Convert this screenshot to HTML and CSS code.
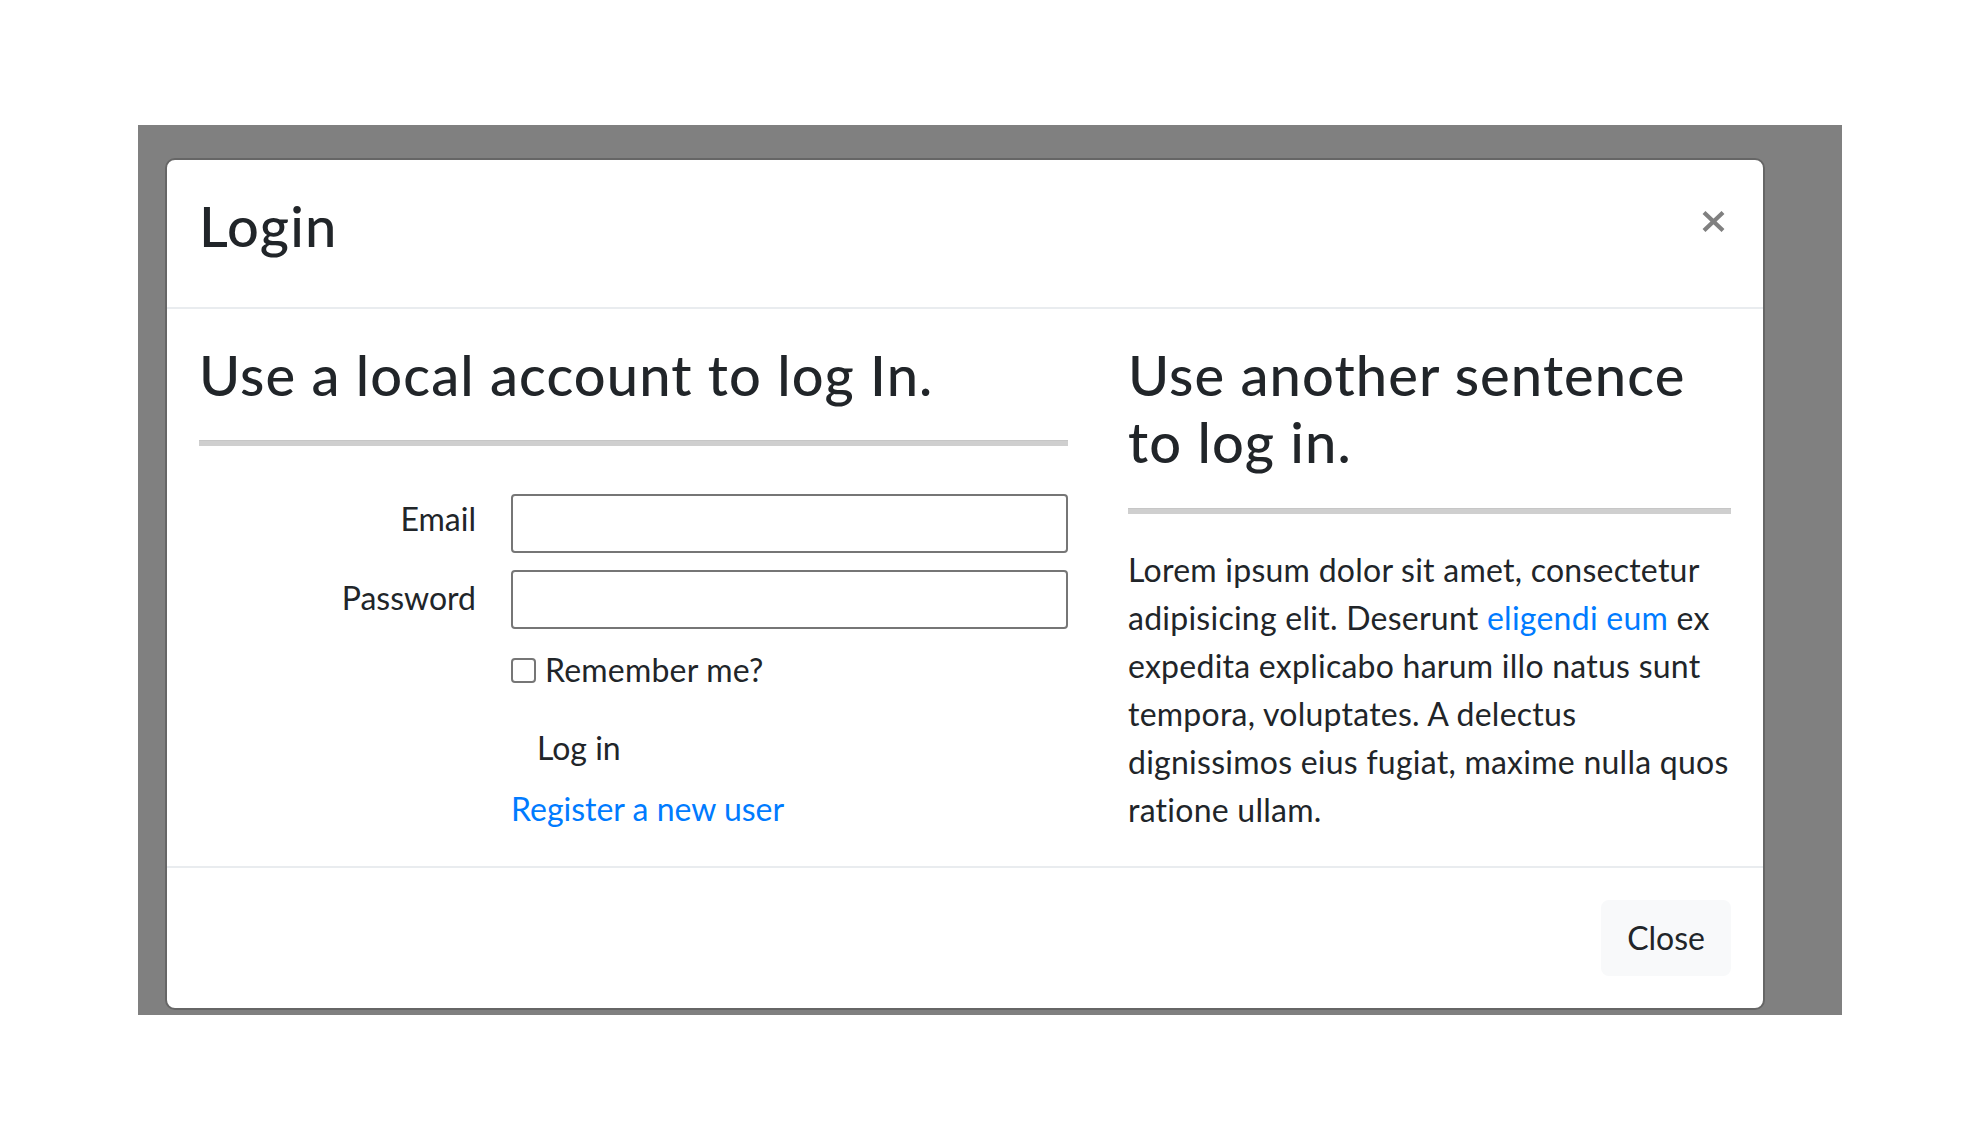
FILE: index.html
```html
<!DOCTYPE html>
<html lang="en">
<head>
<meta charset="utf-8">
<title>Login</title>
<link rel="stylesheet" href="styles.css">
</head>
<body>
<div class="backdrop">
  <div class="modal">
    <div class="modal-header">
      <h3 class="modal-title">Login</h3>
      <button class="close" type="button" aria-label="Close">
        <svg class="close-icon" width="23" height="21" viewBox="0 0 23 21"><path d="M2 1.5 L21 19.5 M21 1.5 L2 19.5" stroke="#808080" stroke-width="4.2" fill="none"/></svg>
      </button>
    </div>
    <div class="modal-body">
      <div class="columns">
        <section class="col-left">
          <h3 class="section-title">Use a local account to log In.</h3>
          <hr class="rule">
          <form class="login-form">
            <div class="form-row">
              <label class="form-label">Email</label>
              <input class="form-input" type="email">
            </div>
            <div class="form-row">
              <label class="form-label label-password">Password</label>
              <input class="form-input" type="password">
            </div>
            <div class="form-row row-check">
              <span></span>
              <label class="check"><input class="check-box" type="checkbox"><span class="check-text">Remember me?</span></label>
            </div>
            <div class="form-row row-submit">
              <span></span>
              <div class="submit-cell"><button class="btn-plain" type="button">Log in</button></div>
            </div>
            <div class="form-row row-link">
              <span></span>
              <a class="link" href="#">Register a new user</a>
            </div>
          </form>
        </section>
        <section class="col-right">
          <h3 class="section-title">Use another sentence to log in.</h3>
          <hr class="rule">
          <p class="text">Lorem ipsum dolor sit amet, consectetur<br>adipisicing elit. Deserunt <a class="link" href="#">eligendi eum</a> ex<br>expedita explicabo harum illo natus sunt<br>tempora, voluptates. A delectus<br>dignissimos eius fugiat, maxime nulla quos<br>ratione ullam.</p>
        </section>
      </div>
    </div>
    <div class="modal-footer">
      <button class="btn-light" type="button">Close</button>
    </div>
  </div>
</div>
</body>
</html>
```

FILE: styles.css
```css
html, body {
  margin: 0;
  padding: 0;
  background: #ffffff;
}

body {
  font-family: "Lato", "Open Sans", sans-serif;
  font-size: 32px;
  line-height: 48px;
  color: #212529;
}

.backdrop {
  margin: 125px 0 0 138px;
  width: 1704px;
  height: 890px;
  box-sizing: border-box;
  padding: 33px 0 0 27px;
  background: #808080;
}

.modal {
  width: 1600px;
  box-sizing: border-box;
  background: #ffffff;
  border: 2px solid #666666;
  border-radius: 10px;
}

.modal-header {
  display: flex;
  align-items: flex-start;
  padding: 32px;
  border-bottom: 2px solid #e9ecef;
}

.modal-title {
  margin: 0 0 16px 0;
  font-size: 56px;
  line-height: 67.2px;
  font-weight: 500;
  letter-spacing: 1.1px;
}

.close {
  margin: 19px 6px 0 auto;
  padding: 0;
  border: 0;
  background: none;
  display: block;
  line-height: 0;
}

.close-icon {
  display: block;
}

.modal-body {
  padding: 32px;
}

.columns {
  display: grid;
  grid-template-columns: 869px 603px;
  column-gap: 60px;
}

.section-title {
  margin: 0;
  font-size: 56px;
  line-height: 67.2px;
  font-weight: 500;
  letter-spacing: 1.1px;
}

.rule {
  margin: 32px 0;
  height: 6px;
  border: 0;
  background: #cfcfcf;
  border-top: 1px solid #c6c6c6;
  box-sizing: border-box;
}

.login-form {
  padding-top: 16px;
}

.form-row {
  display: grid;
  grid-template-columns: 277px 557px;
  column-gap: 35px;
  margin-bottom: 17px;
}

.form-label {
  text-align: right;
  line-height: 48px;
  padding-top: 1px;
}

.label-password {
  padding-top: 4px;
}

.form-input {
  display: block;
  margin: 0;
  width: 557px;
  height: 59px;
  box-sizing: border-box;
  border: 2px solid #767676;
  border-radius: 4px;
  background: #ffffff;
  font: inherit;
}

.row-check {
  margin-bottom: 16px;
}

.check {
  display: flex;
  align-items: center;
  height: 48px;
}

.check-box {
  appearance: none;
  -webkit-appearance: none;
  margin: 0;
  width: 25px;
  height: 25px;
  box-sizing: border-box;
  border: 2px solid #767676;
  border-radius: 4px;
  background: #ffffff;
}

.check-text {
  margin-left: 9px;
  letter-spacing: 0.2px;
}

.row-submit {
  margin-bottom: -1px;
}

.btn-plain {
  display: inline-block;
  margin: 0;
  padding: 12px 24px;
  border: 2px solid transparent;
  background: transparent;
  font: inherit;
  line-height: 48px;
  color: #212529;
}

.row-link {
  margin-bottom: 0;
}

.link {
  color: #007bff;
  text-decoration: none;
}

.text {
  margin: 0;
  white-space: nowrap;
  letter-spacing: 0.25px;
}

.modal-footer {
  display: flex;
  justify-content: flex-end;
  padding: 32px;
  border-top: 2px solid #e9ecef;
}

.btn-light {
  margin: 0;
  padding: 12px 24px;
  border: 2px solid #f8f9fa;
  border-radius: 8px;
  background: #f8f9fa;
  font: inherit;
  line-height: 48px;
  color: #212529;
}
```
